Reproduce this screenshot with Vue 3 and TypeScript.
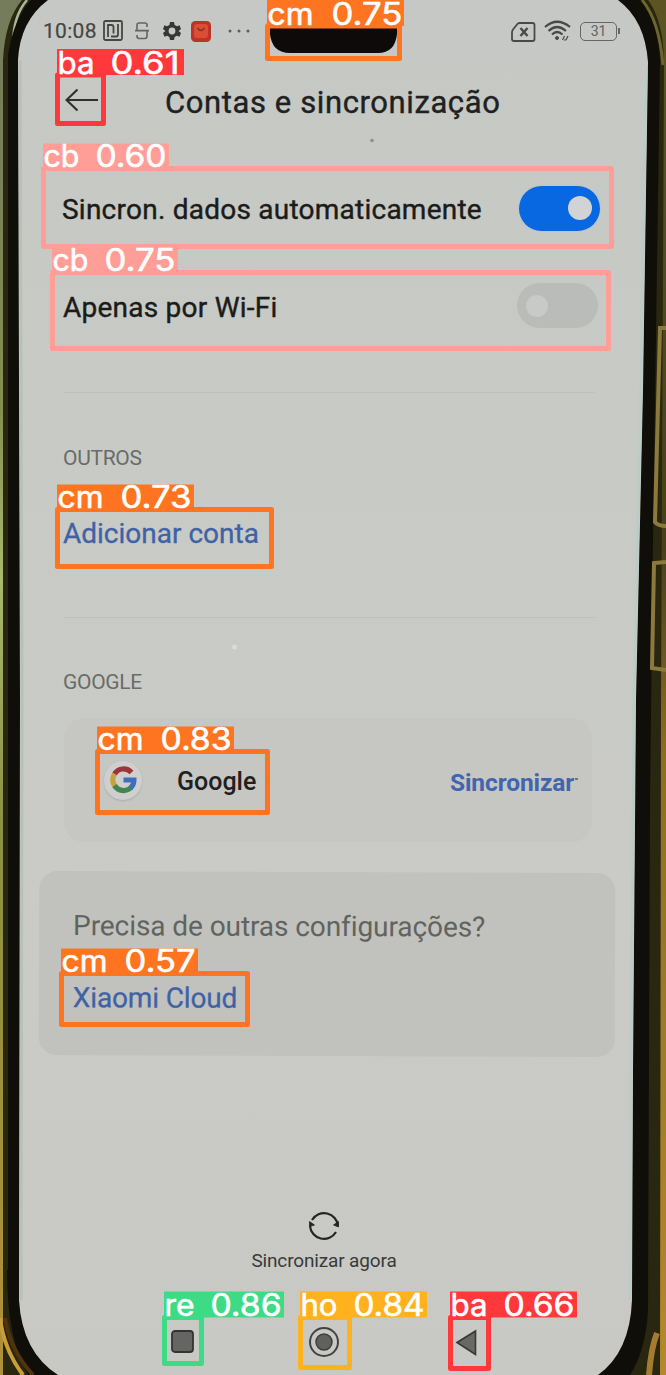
<script setup lang="ts">
interface Detection {
  tag: string
  score: string
  x: number
  y: number
  w: number
  h: number
  labelW: number
  labelH: number
  tagW: number
  scoreX: number
  scoreW: number
  color: string
}

const orange = '#ff7420'
const red = '#ff383c'
const pink = '#ff9d97'

const detections: Detection[] = [
  { tag: 'cm', score: '0.75', x: 267.5, y: 26, w: 132, h: 32.5, labelW: 137, labelH: 26, tagW: 45, scoreX: 65, scoreW: 69, color: orange },
  { tag: 'ba', score: '0.61', x: 57.5, y: 75, w: 46, h: 48.5, labelW: 127, labelH: 26, tagW: 36, scoreX: 54, scoreW: 67, color: red },
  { tag: 'cb', score: '0.60', x: 43.5, y: 168.5, w: 568, h: 78, labelW: 126, labelH: 25, tagW: 35, scoreX: 53, scoreW: 69, color: pink },
  { tag: 'cb', score: '0.75', x: 52.5, y: 272.5, w: 556, h: 76, labelW: 126, labelH: 25, tagW: 35, scoreX: 53, scoreW: 69, color: pink },
  { tag: 'cm', score: '0.73', x: 57.5, y: 509.5, w: 214, h: 57, labelW: 137, labelH: 25, tagW: 45, scoreX: 64, scoreW: 69, color: orange },
  { tag: 'cm', score: '0.83', x: 97.5, y: 751.5, w: 170, h: 61, labelW: 137, labelH: 25, tagW: 45, scoreX: 64, scoreW: 69, color: orange },
  { tag: 'cm', score: '0.57', x: 61.5, y: 973.5, w: 186, h: 51, labelW: 137, labelH: 25, tagW: 45, scoreX: 64, scoreW: 69, color: orange },
  { tag: 're', score: '0.86', x: 164.5, y: 1317.5, w: 37, h: 46, labelW: 120, labelH: 26, tagW: 29, scoreX: 47, scoreW: 69, color: '#3ddb86' },
  { tag: 'ho', score: '0.84', x: 300.5, y: 1317.5, w: 49, h: 50, labelW: 127, labelH: 26, tagW: 36, scoreX: 54, scoreW: 69, color: '#ffb21d' },
  { tag: 'ba', score: '0.66', x: 450.5, y: 1317.5, w: 38, h: 51, labelW: 127, labelH: 26, tagW: 36, scoreX: 54, scoreW: 69, color: red },
]
</script>

<template>
  <div class="stage">
    <svg class="frame" viewBox="0 0 666 1375" width="666" height="1375" aria-hidden="true">
      <defs>
        <linearGradient id="leftEdge" x1="0" y1="0" x2="0" y2="1">
          <stop offset="0" stop-color="#747b5a" />
          <stop offset="0.12" stop-color="#77805a" />
          <stop offset="0.3" stop-color="#85904f" />
          <stop offset="0.42" stop-color="#a8b970" />
          <stop offset="0.6" stop-color="#8b9145" />
          <stop offset="1" stop-color="#b09037" />
        </linearGradient>
        <linearGradient id="rightEdge" x1="0" y1="0" x2="0" y2="1">
          <stop offset="0" stop-color="#5d5423" />
          <stop offset="0.4" stop-color="#49401a" />
          <stop offset="0.55" stop-color="#8d6d25" />
          <stop offset="1" stop-color="#b5892a" />
        </linearGradient>
        <linearGradient id="glass" x1="0" y1="0" x2="0" y2="1">
          <stop offset="0" stop-color="#c5c8c4" />
          <stop offset="0.35" stop-color="#c8cac5" />
          <stop offset="0.65" stop-color="#cacbc6" />
          <stop offset="1" stop-color="#c8c9c5" />
        </linearGradient>
      </defs>
      <rect width="333" height="1375" fill="url(#leftEdge)" />
      <rect x="333" width="333" height="1375" fill="url(#rightEdge)" />
      <path d="M3 1375V60Q5 20 22 0H648Q663 20 664 60L661 700L660 1375Z" fill="#292710" />
      <path d="M14 55Q10 20 27 0" fill="none" stroke="#a8b99b" stroke-width="2.5" />
      <path d="M642 0Q659 20 663 65" fill="none" stroke="#6e642e" stroke-width="3" />
      <path d="M8 1270V55Q14 18 31 0H640Q658 22 660 60L653 540L650 800L648 1310Q646 1350 630 1375H28Q7 1340 7 1270Z" fill="#100e08" />
      <path d="M0 1318Q4 1350 23 1375" fill="none" stroke="#c99d3a" stroke-width="4" />
      <path d="M5 1318Q10 1350 33 1375" fill="none" stroke="#50330f" stroke-width="4" />
      <path d="M657 1333Q651 1348 649 1375" fill="none" stroke="#a37b31" stroke-width="6" />
      <path d="M666 328H660L655 522Q658 526 666 526M666 562L654 563L652 668L666 670" fill="none" stroke="#8b7a3c" stroke-width="4" />
      <path d="M18 60Q20 21 48 0H618Q645 20 648 62L643 390L636 700L633 1070L632 1300Q630 1352 598 1375H58Q22 1352 19 1300L20 700Z" fill="url(#glass)" />
      <path d="M646 70L641 390L634 700L631 1070L630 1300" fill="none" stroke="#bdcbc7" stroke-width="3" />
      <path d="M20 60L22 700L21 1300" fill="none" stroke="#b9bfb9" stroke-width="3" />
      <path d="M270 15H397V34Q395 53 378 53H290Q272 53 270 34Z" fill="#0e0a09" />
    </svg>

    <main class="screen">
      <header class="status">
        <span class="clock">10:08</span>
        <svg class="nfc" width="20" height="21" viewBox="0 0 20 21" fill="none" stroke="#464744" stroke-width="1.8">
          <rect x="1" y="1" width="18" height="19" rx="1.5" />
          <path d="M5 17V5H8.500Q10.500 5 10.500 7V13.500M8 16.500H13Q15 16.500 15 14.500V4" />
        </svg>
        <svg class="s-icon" width="14" height="18" viewBox="0 0 14 18" fill="none" stroke="#636561" stroke-width="1.6">
          <path d="M12 5V3Q12 1 10 1H4Q2 1 2 3V8.600H12V14Q12 16.500 10 16.500H4Q2 16.500 2 14V13M0 8.600H14" />
        </svg>
        <svg class="gear" width="18" height="18" viewBox="0 0 18 18">
          <path d="M7 0H11L11.6 3L14 4.3L16.5 3.2L18 7L15.6 9L18 11L16.5 14.8L14 13.8L11.6 15L11 18H7L6.4 15L4 13.8L1.5 14.8L0 11L2.4 9L0 7L1.5 3.2L4 4.3L6.4 3Z M9 5.6A3.4 3.4 0 1 0 9 12.4A3.4 3.4 0 1 0 9 5.6Z" fill="#363735" fill-rule="evenodd" />
        </svg>
        <svg class="shop" width="20" height="21" viewBox="0 0 20 21">
          <rect width="20" height="21" rx="4.5" fill="#bd3327" />
          <rect x="3" y="3" width="14" height="14" rx="3" fill="#dc4d35" />
          <path d="M6.500 7Q10 12 13.500 7" fill="none" stroke="#84362b" stroke-width="1.6" />
        </svg>
        <svg class="more" width="22" height="4" viewBox="0 0 22 4" fill="#5c5e5a">
          <circle cx="2" cy="2" r="1.5" /><circle cx="11" cy="2" r="1.5" /><circle cx="20" cy="2" r="1.5" />
        </svg>
        <svg class="sim" width="25" height="20" viewBox="0 0 25 20" fill="none" stroke="#484a47" stroke-width="1.8">
          <path d="M8.5 1H21.500Q23.500 1 23.500 3V17Q23.500 19 21.500 19H3Q1 19 1 17V10.500Q1 9 2 7.500L6 2.500Q7 1 8.500 1Z" />
          <path d="M9.500 6L16.500 14M16.500 6L9.500 14" stroke-width="2.400" />
        </svg>
        <svg class="wifi" width="27" height="22" viewBox="0 0 27 22" fill="none" stroke="#484a47" stroke-width="2.2">
          <path d="M1 7Q13 -3.500 26 7M4.500 11Q13 3 22 11M8 14.500Q13 9.500 18.500 14.500" />
          <circle cx="13" cy="18" r="1.500" fill="#484a47" stroke-width="1" />
          <path d="M18.500 20L20.500 16M22 20L24 16M20 20H22" stroke-width="1.200" />
        </svg>
        <span class="battery"><span class="charge">31</span></span>
      </header>

      <div class="titlebar">
        <svg class="back" width="34" height="24" viewBox="0 0 34 24" fill="none" stroke="#30312f" stroke-width="2.200">
          <path d="M33 12H1.500M12.500 1.500L1.500 12L12.500 22.500" />
        </svg>
        <h1>Contas e sincronização</h1>
      </div>

      <div class="row row-auto">
        <span class="t-auto">Sincron. dados automaticamente</span>
        <span class="switch on"><i class="knob"></i></span>
      </div>
      <div class="row row-wifi">
        <span class="t-wifi">Apenas por Wi-Fi</span>
        <span class="switch"><i class="knob"></i></span>
      </div>

      <section class="group others">
        <h2 class="t-others">OUTROS</h2>
        <a class="link t-add">Adicionar conta</a>
      </section>

      <section class="group google">
        <h2 class="t-google">GOOGLE</h2>
        <div class="account">
          <span class="logo">
            <svg width="27" height="28" viewBox="0 0 27 28" fill="none" stroke-width="5.200">
              <path d="M4.500 8A10.800 11 0 0 1 21.500 6.500" stroke="#9c3438" />
              <path d="M4.800 20A11 11 0 0 1 4.500 8" stroke="#c5a43d" />
              <path d="M21 21.500A10.800 11 0 0 1 4.500 19.500" stroke="#438453" />
              <path d="M13.500 14H24Q24 19 20.500 22" stroke="#3e6ebc" stroke-width="5" />
            </svg>
          </span>
          <span class="name">Google</span>
          <span class="sync">Sincronizar</span>
          <i class="tick"></i>
        </div>
      </section>

      <section class="cloud">
        <p>Precisa de outras configurações?</p>
        <a class="link t-cloud">Xiaomi Cloud</a>
      </section>

      <footer class="sync-now">
        <svg width="34" height="34" viewBox="0 0 34 34" fill="none" stroke="#242523" stroke-width="2.200">
          <path d="M5 11A14 14 0 0 1 31 17M29 23A14 14 0 0 1 3 17" />
          <path d="M2.500 12.500V17.500L7.500 16ZM31.500 12.500V18L26.500 16Z" fill="#242523" stroke-width="0.800" />
        </svg>
        <span>Sincronizar agora</span>
      </footer>

      <nav class="nav">
        <svg class="recent" width="24" height="24" viewBox="0 0 24 24"><rect x="1" y="1" width="21" height="21" rx="3" fill="#656663" stroke="#343533" stroke-width="1.800" /></svg>
        <svg class="home" width="32" height="32" viewBox="0 0 32 32"><circle cx="16" cy="16" r="14" fill="none" stroke="#424341" stroke-width="2" /><circle cx="16" cy="16" r="8" fill="#60615e" stroke="#3d3e3c" stroke-width="1.500" /></svg>
        <svg class="prev" width="23" height="27" viewBox="0 0 23 27"><path d="M2 13.500L20.500 2V25.500Z" fill="#686966" stroke="#373836" stroke-width="1.600" /></svg>
      </nav>
    </main>

    <svg class="overlay" viewBox="0 0 666 1375" width="666" height="1375">
      <circle cx="372" cy="140.500" r="1.800" fill="#8e918d" />
      <circle cx="234.500" cy="647" r="2.500" fill="#dadcd8" />
      <g v-for="(d, i) in detections" :key="i">
        <rect :x="d.x" :y="d.y" :width="d.w" :height="d.h" fill="none" :stroke="d.color" stroke-width="5" stroke-linejoin="round" />
        <rect :x="d.x - 0.5" :y="d.y - d.labelH" :width="d.labelW" :height="d.labelH" :fill="d.color" />
        <text class="label" :y="d.y - 1.5">
          <tspan :x="d.x" :textLength="d.tagW + 1" lengthAdjust="spacingAndGlyphs">{{ d.tag }}</tspan>
          <tspan :x="d.x + d.scoreX - 1" :textLength="d.scoreW + 2" lengthAdjust="spacingAndGlyphs">{{ d.score }}</tspan>
        </text>
      </g>
    </svg>
  </div>
</template>

<style>
html,
body {
  margin: 0;
  background: #100e08;
}
</style>

<style scoped>
.stage {
  position: relative;
  width: 666px;
  height: 1375px;
  overflow: hidden;
  font-family: Roboto, "Liberation Sans", sans-serif;
  color: #20211f;
}
.frame,
.overlay {
  position: absolute;
  left: 0;
  top: 0;
}
.label {
  font-family: Inter, sans-serif;
  font-size: 31px;
  fill: #fff;
  stroke: #fff;
  stroke-width: 0.6px;
}
.screen {
  position: relative;
  box-sizing: border-box;
  height: 1375px;
  display: flex;
  flex-direction: column;
  white-space: nowrap;
}
h1,
h2,
p {
  margin: 0;
  font-weight: 400;
}
.status {
  display: flex;
  align-items: center;
  height: 62px;
  padding-left: 43px;
}
.clock {
  width: 60px;
  font-size: 21px;
  letter-spacing: 0.3px;
  color: #454643;
  -webkit-text-stroke: 0.2px #454643;
}
.nfc { margin-top: -1px; }
.s-icon { margin-left: 12px; }
.gear { margin-left: 14px; }
.shop { margin-left: 10px; }
.more { margin-left: 17px; }
.sim { margin-left: 261px; margin-top: 1px; }
.wifi { margin-left: 8px; }
.battery {
  position: relative;
  display: flex;
  justify-content: center;
  box-sizing: border-box;
  width: 37px;
  height: 19px;
  margin-left: 9px;
  border: 1.5px solid #656762;
  border-radius: 5px;
  font-size: 14px;
  line-height: 17px;
  color: #62645f;
}
.battery::after {
  content: "";
  position: absolute;
  right: -4px;
  top: 5px;
  width: 2px;
  height: 6px;
  background: #656762;
}
.titlebar {
  display: flex;
  align-items: center;
  height: 82px;
  padding-left: 65px;
}
.back { margin-top: -6px; }
h1 {
  margin-left: 66px;
  font-size: 31px;
  line-height: 34px;
  letter-spacing: 0.6px;
  -webkit-text-stroke: 0.4px #20211f;
}
.row {
  display: flex;
  align-items: center;
  justify-content: space-between;
  font-size: 28px;
  letter-spacing: 0.24px;
  -webkit-text-stroke: 0.4px #1b1c1a;
  color: #1b1c1a;
}
.row-auto {
  height: 97px;
  padding: 31px 66px 0 62px;
  box-sizing: border-box;
}
.t-auto { margin-top: 3px; }
.row-wifi {
  height: 96px;
  padding: 0 68px 0 63px;
  box-sizing: border-box;
  margin-top: 18px;
}
.row-wifi .switch { margin-top: -3px; }
.switch {
  display: flex;
  align-items: center;
  justify-content: flex-start;
  box-sizing: border-box;
  width: 81px;
  height: 45px;
  padding: 0 9px;
  border-radius: 23px;
  background: #babcb9;
}
.switch.on {
  justify-content: flex-end;
  padding: 0 8px;
  background: #0868e1;
  box-shadow: 0 0 2px #a9bce0;
}
.knob {
  width: 22px;
  height: 22px;
  border-radius: 50%;
  background: #c8cac7;
}
.on .knob {
  width: 24px;
  height: 24px;
  background: #d1d3d4;
}
.group {
  box-sizing: border-box;
  margin: 0 71px 0 64px;
  border-top: 1px solid #bdc0bc;
}
h2 {
  margin-left: -1px;
  font-size: 21px;
  line-height: 24px;
  letter-spacing: -0.3px;
  color: #6a6c68;
}
.link {
  display: block;
  font-size: 28px;
  line-height: 34px;
  color: #3f62a5;
  -webkit-text-stroke: 0.3px #3f62a5;
}
.others {
  height: 225px;
  margin-top: 37px;
  padding-top: 53px;
}
.t-add {
  margin-top: 47px;
  margin-left: -1px;
}
.google {
  height: 255px;
  padding-top: 52px;
}
.account {
  display: flex;
  align-items: center;
  box-sizing: border-box;
  width: 528px;
  height: 124px;
  margin-top: 24px;
  padding-left: 40px;
  border-radius: 20px;
  background: #c6c7c3;
}
.logo {
  display: flex;
  align-items: center;
  justify-content: center;
  width: 38px;
  height: 39px;
  border-radius: 50%;
  background: #cfd0ce;
  box-shadow: 0 1px 2px #aaaaa7;
}
.name {
  width: 273px;
  margin: 3px 0 0 35px;
  font-size: 25px;
  font-weight: 500;
}
.sync {
  margin-top: 5px;
  font-size: 24.5px;
  font-weight: 700;
  letter-spacing: -0.1px;
  color: #4166af;
}
.tick {
  width: 3px;
  height: 2px;
  margin: -3px 0 0 1px;
  background: #826f68;
}
.cloud {
  box-sizing: border-box;
  width: 576px;
  height: 184px;
  margin: 0 0 0 39px;
  padding: 38px 0 0 34px;
  border-radius: 18px;
  background: #c1c2be;
  transform: rotate(0.2deg);
}
.cloud p {
  font-size: 28px;
  line-height: 34px;
  letter-spacing: -0.08px;
  color: #61635f;
}
.t-cloud {
  margin-top: 38px;
  letter-spacing: -0.15px;
}
.sync-now {
  display: flex;
  flex-direction: column;
  align-items: center;
  width: 648px;
  margin-top: 153px;
  font-size: 19px;
  line-height: 24px;
  letter-spacing: -0.15px;
  color: #393a38;
}
.sync-now span { margin-top: 6px; }
.nav {
  display: flex;
  align-items: center;
  height: 44px;
  margin-top: 47px;
  padding-left: 171px;
}
.home { margin-left: 113px; }
.prev { margin-left: 115px; }
</style>
